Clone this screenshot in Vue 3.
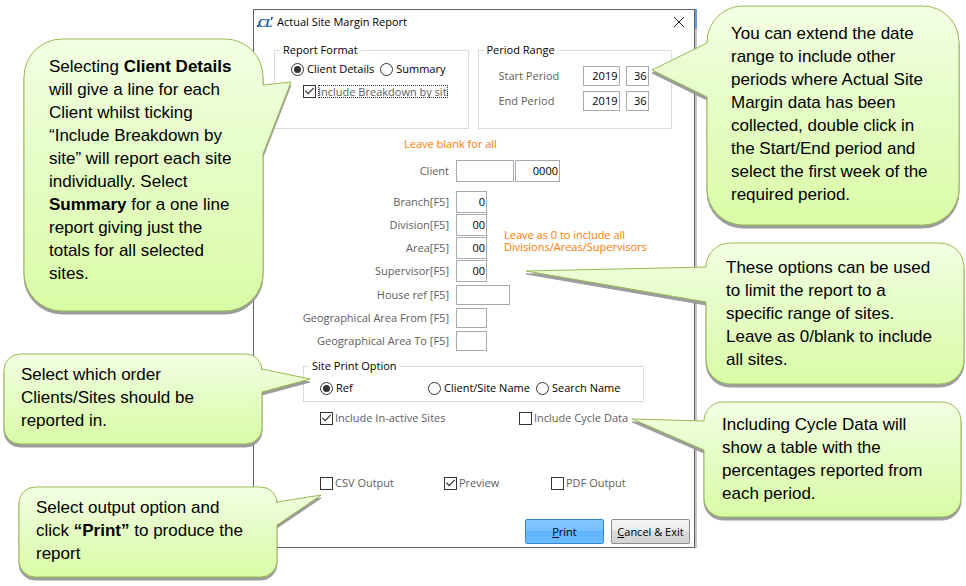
<template>
  <main class="guide">
    <div class="column column-left">
      <section v-for="note in leftNotes" :key="note.id" class="callout" :class="note.id">
        <svg class="bubble" :viewBox="`0 0 ${note.width} ${note.height}`" preserveAspectRatio="none" aria-hidden="true">
          <defs>
            <linearGradient :id="`fill-${note.id}`" x1="0" y1="0" x2="0" y2="1">
              <stop offset="0" stop-color="#f3ffe3" />
              <stop offset="0.35" stop-color="#e8fdcd" />
              <stop offset="1" stop-color="#d9fca6" />
            </linearGradient>
          </defs>
          <path :d="bubblePath(note)" :fill="`url(#fill-${note.id})`" />
        </svg>
        <p class="callout-text">
          <span v-for="(line, i) in note.lines" :key="i" class="line">
            <component :is="part.bold ? 'strong' : 'span'" v-for="(part, j) in parts(line)" :key="j">{{ part.text }}</component>
          </span>
        </p>
      </section>
    </div>

    <div class="dialog-edge">
      <form class="dialog" @submit.prevent>
        <header class="title-bar">
          <svg class="logo" viewBox="0 0 16 14" aria-hidden="true">
            <rect x="0" y="10" width="2" height="2" />
            <text x="1" y="12">C</text>
            <text x="8" y="12">L</text>
            <path d="M14 2H16L15 5H14Z" />
          </svg>
          <h1>Actual Site Margin Report</h1>
          <button type="button" class="close" aria-label="Close">
            <svg viewBox="0 0 12 12"><path d="M1 1L11 11M11 1L1 11" /></svg>
          </button>
        </header>

        <div class="panels">
          <fieldset class="panel">
            <legend>Report Format</legend>
            <div class="format-row">
              <label class="choice strong"><input v-model="format" type="radio" value="details" name="format" />Client Details</label>
              <label class="choice strong"><input v-model="format" type="radio" value="summary" name="format" />Summary</label>
            </div>
            <label class="choice breakdown"><input v-model="breakdown" type="checkbox" /><span class="focused">Include Breakdown by site</span></label>
          </fieldset>

          <fieldset class="panel">
            <legend>Period Range</legend>
            <div class="periods">
              <div v-for="period in periods" :key="period.id" class="period-row">
                <label :for="period.id">{{ period.label }}</label>
                <input :id="period.id" v-model="period.year" type="text" class="box year" />
                <input v-model="period.week" type="text" class="box week" :aria-label="`${period.label} week`" />
              </div>
            </div>
          </fieldset>
        </div>

        <p class="hint hint-top">Leave blank for all</p>

        <div class="field client-row">
          <label for="client">Client</label>
          <input id="client" v-model="client" type="text" class="box wide tall" />
          <input v-model="clientNo" type="text" class="box number tall" aria-label="Client number" />
        </div>

        <div class="limits">
          <div>
            <div v-for="field in limits" :key="field.id" class="field">
              <label :for="field.id">{{ field.label }}</label>
              <input :id="field.id" v-model="field.value" type="text" class="box tall" />
            </div>
          </div>
          <p class="hint">Leave as 0 to include all<br />Divisions/Areas/Supervisors</p>
        </div>

        <div class="places">
          <div v-for="field in places" :key="field.id" class="field">
            <label :for="field.id">{{ field.label }}</label>
            <input :id="field.id" v-model="field.value" type="text" class="box" :class="{ house: field.id === 'house' }" />
          </div>
        </div>

        <fieldset class="panel print-option">
          <legend>Site Print Option</legend>
          <div class="order-row">
            <label v-for="item in orders" :key="item" class="choice strong"><input v-model="order" type="radio" :value="item" name="order" />{{ item }}</label>
          </div>
        </fieldset>

        <div class="checks include-row">
          <label class="choice"><input v-model="inactive" type="checkbox" />Include In-active Sites</label>
          <label class="choice"><input v-model="cycle" type="checkbox" />Include Cycle Data</label>
        </div>
        <div class="checks output-row">
          <label class="choice"><input v-model="csv" type="checkbox" />CSV Output</label>
          <label class="choice"><input v-model="preview" type="checkbox" />Preview</label>
          <label class="choice"><input v-model="pdf" type="checkbox" />PDF Output</label>
        </div>

        <footer class="actions">
          <button type="submit" class="btn primary"><u>P</u>rint</button>
          <button type="button" class="btn"><u>C</u>ancel &amp; Exit</button>
        </footer>
      </form>
    </div>

    <div class="column column-right">
      <section v-for="note in rightNotes" :key="note.id" class="callout" :class="note.id">
        <svg class="bubble" :viewBox="`0 0 ${note.width} ${note.height}`" preserveAspectRatio="none" aria-hidden="true">
          <defs>
            <linearGradient :id="`fill-${note.id}`" x1="0" y1="0" x2="0" y2="1">
              <stop offset="0" stop-color="#f3ffe3" />
              <stop offset="0.35" stop-color="#e8fdcd" />
              <stop offset="1" stop-color="#d9fca6" />
            </linearGradient>
          </defs>
          <path :d="bubblePath(note)" :fill="`url(#fill-${note.id})`" />
        </svg>
        <p class="callout-text">
          <span v-for="(line, i) in note.lines" :key="i" class="line">
            <component :is="part.bold ? 'strong' : 'span'" v-for="(part, j) in parts(line)" :key="j">{{ part.text }}</component>
          </span>
        </p>
      </section>
    </div>
  </main>
</template>

<script setup>
import { ref } from 'vue'

// tail: [start y, tip x, tip y, end y], measured from the bubble's top left
const leftNotes = [
  {
    id: 'format-note',
    side: 'right',
    width: 239,
    height: 272,
    radius: 38,
    tail: [46, 267, 43, 115],
    lines: [
      'Selecting **Client Details**',
      'will give a line for each',
      'Client whilst ticking',
      '“Include Breakdown by',
      'site” will report each site',
      'individually. Select',
      '**Summary** for a one line',
      'report giving just the',
      'totals for all selected',
      'sites.'
    ]
  },
  {
    id: 'order-note',
    side: 'right',
    width: 257,
    height: 90,
    radius: 16,
    tail: [15, 305, 25, 38],
    lines: ['Select which order', 'Clients/Sites should be', 'reported in.']
  },
  {
    id: 'output-note',
    side: 'right',
    width: 257,
    height: 90,
    radius: 16,
    tail: [15, 301, 8, 38],
    lines: ['Select output option and', 'click **“Print”** to produce the', 'report']
  }
]

const rightNotes = [
  {
    id: 'period-note',
    side: 'left',
    width: 252,
    height: 219,
    radius: 36,
    tail: [37, -55, 64, 91],
    lines: [
      'You can extend the date',
      'range to include other',
      'periods where Actual Site',
      'Margin data has been',
      'collected, double click in',
      'the Start/End period and',
      'select the first week of the',
      'required period.'
    ]
  },
  {
    id: 'limit-note',
    side: 'left',
    width: 258,
    height: 141,
    radius: 24,
    tail: [24, -180, 28, 59],
    lines: [
      'These options can be used',
      'to limit the report to a',
      'specific range of sites.',
      'Leave as 0/blank to include',
      'all sites.'
    ]
  },
  {
    id: 'cycle-note',
    side: 'left',
    width: 258,
    height: 115,
    radius: 19,
    tail: [19, -72, 17, 48],
    lines: ['Including Cycle Data will', 'show a table with the', 'percentages reported from', 'each period.']
  }
]

const format = ref('details')
const breakdown = ref(true)
const periods = ref([
  { id: 'start', label: 'Start Period', year: '2019', week: '36' },
  { id: 'end', label: 'End Period', year: '2019', week: '36' }
])
const client = ref('')
const clientNo = ref('0000')
const limits = ref([
  { id: 'branch', label: 'Branch[F5]', value: '0' },
  { id: 'division', label: 'Division[F5]', value: '00' },
  { id: 'area', label: 'Area[F5]', value: '00' },
  { id: 'supervisor', label: 'Supervisor[F5]', value: '00' }
])
const places = ref([
  { id: 'house', label: 'House ref [F5]', value: '' },
  { id: 'geo-from', label: 'Geographical Area From [F5]', value: '' },
  { id: 'geo-to', label: 'Geographical Area To [F5]', value: '' }
])
const orders = ['Ref', 'Client/Site Name', 'Search Name']
const order = ref('Ref')
const inactive = ref(true)
const cycle = ref(false)
const csv = ref(false)
const preview = ref(true)
const pdf = ref(false)

// **text** marks a bold run
const parts = (line) =>
  line
    .split('**')
    .map((text, i) => ({ text, bold: i % 2 === 1 }))
    .filter((part) => part.text)

const bubblePath = ({ side, width: w, height: h, radius: r, tail }) => {
  const [from, tipX, tipY, to] = tail
  const right = side === 'right' ? `V${from} L${tipX} ${tipY} L${w} ${to}` : ''
  const left = side === 'left' ? `V${to} L${tipX} ${tipY} L0 ${from}` : ''
  return `M${r} 0 H${w - r} A${r} ${r} 0 0 1 ${w} ${r} ${right} V${h - r} A${r} ${r} 0 0 1 ${w - r} ${h} H${r} A${r} ${r} 0 0 1 0 ${h - r} ${left} V${r} A${r} ${r} 0 0 1 ${r} 0 Z`
}
</script>

<style>
body {
  background: #fff;
}
</style>

<style scoped>
.guide {
  display: grid;
  grid-template-columns: 253fr 444fr 269fr;
  align-items: start;
  padding-bottom: 9px;
  font-family: "Open Sans", "Noto Sans", sans-serif;
  font-size: 11px;
  line-height: 14px;
  color: #000;
}

.column {
  position: relative;
  z-index: 1;
  display: flex;
  flex-direction: column;
  min-width: 0;
}

.column-left {
  padding-top: 39px;
  gap: 43px;
}

.column-right {
  padding-top: 6px;
  gap: 18px;
}

.callout {
  position: relative;
}

.format-note {
  margin: 0 -10px 0 24px;
  padding: 16px 0 26px 25px;
}

.order-note {
  margin: 0 -9px 0 4px;
  padding: 9px 0 12px 17px;
}

.output-note {
  margin: 0 -24px 0 19px;
  padding: 9px 0 12px 17px;
}

.period-note {
  margin: 0 7px 0 10px;
  padding: 16px 0 19px 24px;
}

.limit-note {
  margin: 0 2px 0 9px;
  padding: 13px 0 13px 20px;
}

.cycle-note {
  margin: 0 5px 0 7px;
  padding: 11px 0 12px 18px;
}

.bubble {
  position: absolute;
  inset: 0;
  width: 100%;
  height: 100%;
  overflow: visible;
  filter: drop-shadow(0 3px 0 #9c9c9c);
}

.bubble path {
  stroke: #98b954;
  stroke-width: 1;
  vector-effect: non-scaling-stroke;
}

.callout-text {
  position: relative;
  margin: 0;
  font-family: "Liberation Sans", Arial, sans-serif;
  font-size: 17px;
  line-height: 23px;
  white-space: nowrap;
}

.line {
  display: block;
}

.line > * {
  white-space: pre;
}

.dialog-edge {
  margin-top: 9px;
  padding-right: 2px;
  background: linear-gradient(#6c9bdc 20px, #c8c4c4 20px);
}

.dialog {
  box-sizing: border-box;
  border: 1px solid #5c606b;
  background: #fff;
  padding-bottom: 3px;
}

.title-bar {
  display: flex;
  align-items: center;
  height: 24px;
  padding: 0 9px 0 3px;
}

.logo {
  width: 16px;
  height: 14px;
  margin-right: 4px;
  fill: #155a94;
}

.logo text {
  font: italic bold 12px "Liberation Serif", serif;
}

h1 {
  flex: 1;
  margin: 0;
  font-size: 11px;
  font-weight: 400;
}

.close {
  width: 12px;
  height: 12px;
  padding: 0;
  border: 0;
  background: none;
}

.close svg {
  display: block;
  fill: none;
  stroke: #222;
}

.panels {
  display: grid;
  grid-template-columns: 1fr 1fr;
  gap: 9px;
  padding: 9px 22px 0 20px;
}

.panel {
  min-width: 0;
  margin: 0;
  padding: 0;
  border: 1px solid #dcdcdc;
}

.panels .panel {
  height: 86px;
  box-sizing: border-box;
}

legend {
  margin-left: 5px;
  padding: 0 3px;
}

.choice {
  display: flex;
  align-items: center;
  gap: 2px;
  height: 14px;
  color: #5e5e5e;
  white-space: nowrap;
}

.choice.strong {
  gap: 3px;
  color: #000;
}

.choice input {
  appearance: none;
  display: grid;
  place-content: center;
  flex: none;
  box-sizing: border-box;
  width: 13px;
  height: 13px;
  margin: 0;
  border: 1px solid #333;
  background: #fff;
}

.choice input[type="radio"] {
  border-radius: 50%;
}

.choice input[type="radio"]:checked::before {
  content: "";
  width: 7px;
  height: 7px;
  border-radius: 50%;
  background: #333;
}

.choice input[type="checkbox"]:checked::before {
  content: "";
  width: 11px;
  height: 11px;
  background: #333;
  clip-path: polygon(8% 50%, 16% 43%, 38% 66%, 86% 18%, 93% 26%, 38% 81%);
}

.format-row {
  display: flex;
  gap: 6px;
  padding: 5px 0 0 16px;
}

.breakdown {
  margin: 8px 0 0 28px;
}

.focused {
  box-sizing: border-box;
  width: 130px;
  height: 13px;
  line-height: 13px;
  overflow: hidden;
  outline: 1px dotted #333;
  outline-offset: -1px;
}

.periods {
  padding-top: 6px;
}

.period-row {
  display: flex;
  align-items: center;
  height: 25px;
  padding-left: 20px;
  color: #5e5e5e;
}

.period-row label {
  width: 84px;
}

.box {
  box-sizing: border-box;
  width: 31px;
  height: 20px;
  margin: 0;
  padding: 0 1px;
  border: 1px solid #a9a9b1;
  border-radius: 0;
  background: #fff;
  color: #000;
  font-family: inherit;
  font-size: 11px;
  text-align: right;
}

.box.tall {
  height: 22px;
}

.box.year {
  width: 37px;
  margin-right: 6px;
}

.box.week {
  width: 23px;
}

.box.wide {
  width: 58px;
}

.box.number {
  width: 45px;
  margin-left: 1px;
}

.box.house {
  width: 54px;
}

.hint {
  margin: 0;
  line-height: 12px;
  color: #ff7a00;
}

.hint-top {
  padding: 9px 0 9px 150px;
}

.field {
  display: flex;
  align-items: center;
  height: 23px;
  color: #5e5e5e;
}

.field label {
  width: 195px;
  margin-right: 7px;
  text-align: right;
  white-space: nowrap;
}

.client-row {
  margin-bottom: 8px;
}

.limits {
  display: flex;
  align-items: center;
}

.limits .hint {
  padding: 10px 0 0 17px;
}

.places {
  margin-top: 1px;
}

.print-option {
  margin: 7px 50px 0 49px;
}

.order-row {
  display: grid;
  grid-template-columns: 108px 108px 1fr;
  padding: 8px 0 6px 16px;
}

.checks {
  display: grid;
  padding-left: 66px;
}

.include-row {
  grid-template-columns: 199px 1fr;
  margin-top: 9px;
}

.output-row {
  grid-template-columns: 124px 107px 1fr;
  margin-top: 51px;
}

.actions {
  display: flex;
  justify-content: flex-end;
  gap: 7px;
  margin-top: 29px;
  padding-right: 4px;
}

.btn {
  width: 79px;
  height: 25px;
  padding: 0;
  border: 1px solid #8c8c8c;
  border-radius: 2px;
  background: linear-gradient(#f4f4f4, #ececec 50%, #dcdcdc 50%, #d2d2d2);
  color: #000;
  font-family: inherit;
  font-size: 11px;
  white-space: nowrap;
}

.btn.primary {
  border-color: #2f86d6;
  background: linear-gradient(#86c8ff, #74bfff 50%, #5fb4ff 50%, #6cbcff);
}
</style>
